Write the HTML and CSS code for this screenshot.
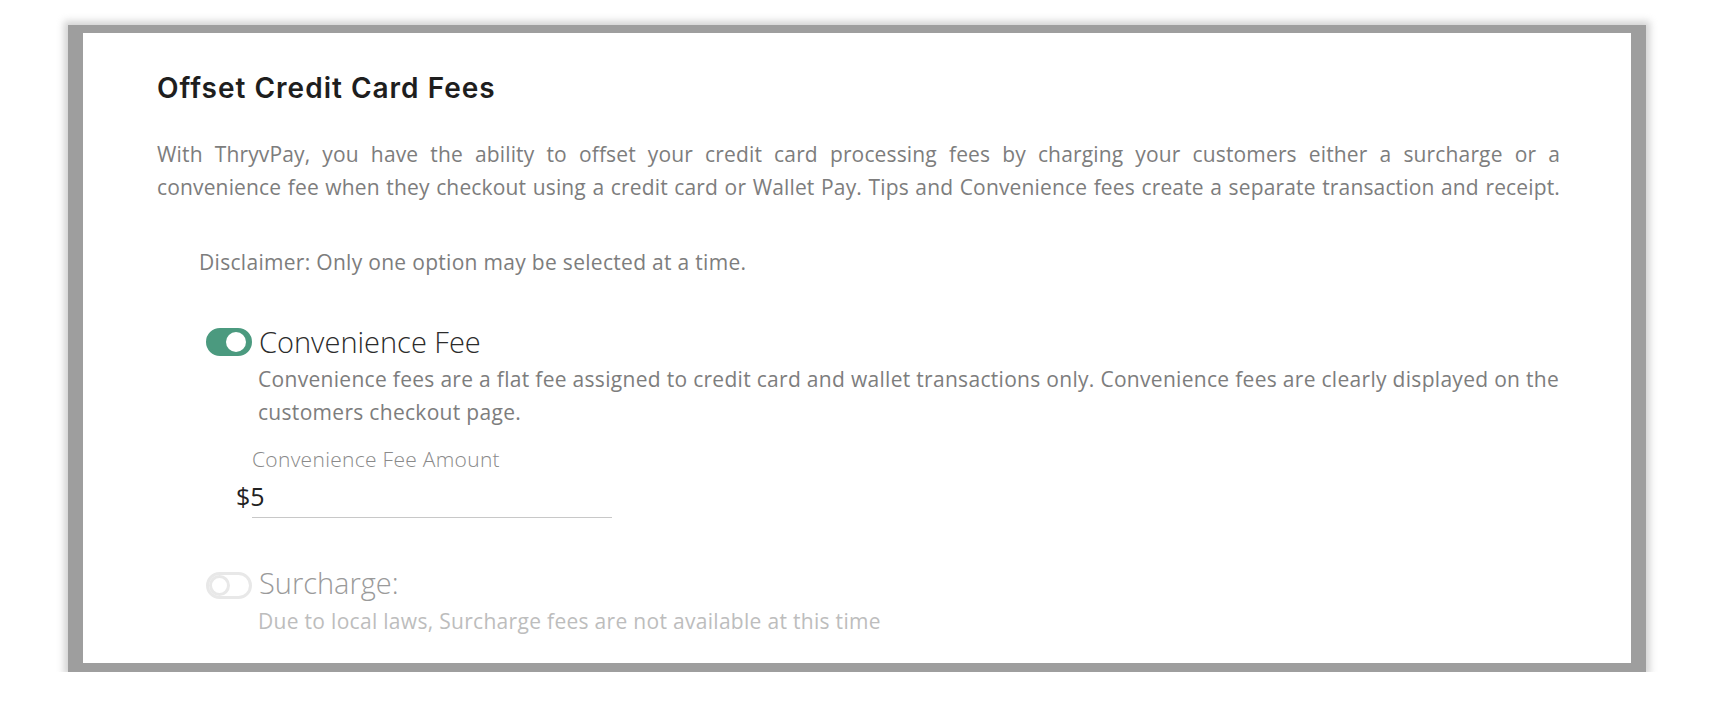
FILE: index.html
```html
<!DOCTYPE html>
<html lang="en">
<head>
    <meta charset="UTF-8">
    <meta name="viewport" content="width=device-width, initial-scale=1.0">
    <title>Offset Credit Card Fees</title>
    <link rel="stylesheet" href="styles.css">
</head>
<body>
    <div class="page">
        <section class="card">
            <h2 class="card-title">Offset Credit Card Fees</h2>
            <p class="intro">With ThryvPay, you have the ability to offset your credit card processing fees by charging your customers either a surcharge or a<br>convenience fee when they checkout using a credit card or Wallet Pay. Tips and Convenience fees create a separate transaction and receipt.</p>

            <div class="options">
                <p class="disclaimer">Disclaimer: Only one option may be selected at a time.</p>

                <div class="option">
                    <div class="option-head">
                        <span class="switch on"><span class="knob"></span></span>
                        <span class="option-name">Convenience Fee</span>
                    </div>
                    <p class="option-desc">Convenience fees are a flat fee assigned to credit card and wallet transactions only. Convenience fees are clearly displayed on the customers checkout page.</p>
                    <div class="fee-field">
                        <label class="fee-label">Convenience Fee Amount</label>
                        <div class="fee-input"><span class="currency">$</span>5</div>
                    </div>
                </div>

                <div class="option disabled">
                    <div class="option-head">
                        <span class="switch"><span class="knob"></span></span>
                        <span class="option-name">Surcharge:</span>
                    </div>
                    <p class="option-desc">Due to local laws, Surcharge fees are not available at this time</p>
                </div>
            </div>
        </section>
    </div>
</body>
</html>
```

FILE: styles.css
```css
body {
    margin: 0;
    background-color: #ffffff;
    font-family: "Open Sans", "Liberation Sans", sans-serif;
}
.page {
    padding: 25px 72px 0 68px;
}
.card {
    background-color: #ffffff;
    border: solid #9e9e9e;
    border-width: 8px 15px 9px 15px;
    box-shadow: 0 0 7px 4px rgba(158, 158, 158, 0.45);
    padding: 39px 71px 30px 74px;
    height: 561px;
}
.card-title {
    margin: 0;
    font-family: "Inter", "Liberation Sans", sans-serif;
    font-size: 28px;
    font-weight: 600;
    letter-spacing: 1px;
    line-height: 32px;
    color: #1e1e1e;
}
.intro {
    margin: 34px 0 0 0;
    font-size: 21px;
    letter-spacing: 0.15px;
    line-height: 33px;
    color: #7d7d7d;
    text-align: justify;
    text-align-last: justify;
}
.options {
    padding-left: 42px;
}
.disclaimer {
    margin: 42px 0 0 0;
    font-size: 21px;
    letter-spacing: 0.3px;
    line-height: 33px;
    color: #7d7d7d;
}
.option {
    margin-top: 46px;
    padding-left: 7px;
}
.option + .option {
    margin-top: 50px;
}
.option-head {
    display: flex;
    align-items: center;
    gap: 7px;
    height: 34px;
}
.switch {
    display: flex;
    align-items: center;
    width: 46px;
    height: 27px;
    box-sizing: border-box;
    padding: 0;
    border-radius: 14px;
    border: 3px solid #e8e8e8;
    background-color: #ffffff;
}
.switch .knob {
    width: 21px;
    height: 21px;
    box-sizing: border-box;
    border-radius: 50%;
    border: 3px solid #e8e8e8;
    background-color: #ffffff;
}
.switch.on {
    height: 28px;
    padding: 0 3px;
    background-color: #4b9a7f;
    border-color: #4b9a7f;
    justify-content: flex-end;
}
.switch.on .knob {
    width: 20px;
    height: 20px;
    border: none;
}
.option-name {
    font-size: 29px;
    font-weight: 300;
    line-height: 34px;
    color: #2b2b2b;
}
.option-desc {
    margin: 4px -20px 0 52px;
    font-size: 21px;
    letter-spacing: 0.3px;
    line-height: 33px;
    color: #7d7d7d;
}
.disabled .option-name {
    color: #9a9a9a;
    margin-top: -4px;
}
.disabled .option-desc {
    color: #bdbdbd;
    margin-top: 3px;
}
.fee-field {
    margin: 17px 0 0 46px;
    width: 360px;
}
.fee-label {
    display: block;
    font-size: 21px;
    font-weight: 300;
    letter-spacing: 0.3px;
    line-height: 26px;
    color: #8a8a8a;
}
.fee-input {
    display: flex;
    align-items: center;
    height: 39px;
    margin-top: 4px;
    border-bottom: 1px solid #c8c8c8;
    font-size: 25px;
    color: #222222;
    padding-bottom: 2px;
}
.currency {
    margin-left: -16px;
}
```
